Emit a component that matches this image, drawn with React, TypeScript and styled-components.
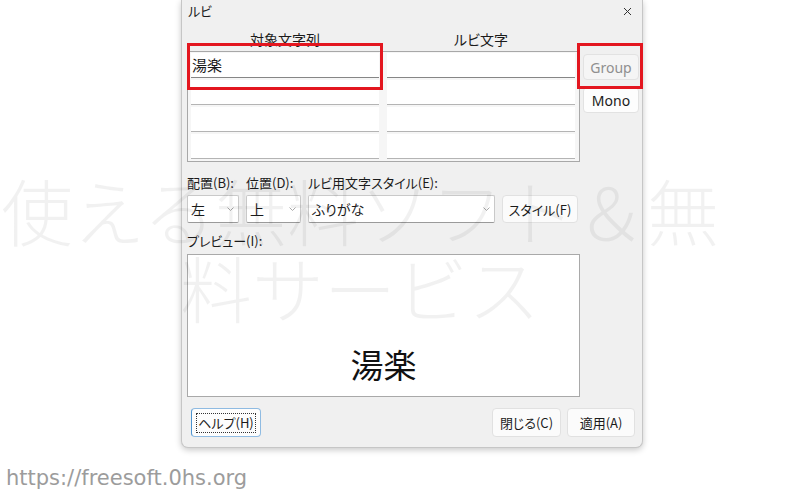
import styled, { createGlobalStyle } from 'styled-components'

const GlobalStyle = createGlobalStyle`
    html, body {
        margin: 0;
        padding: 0;
        background: #ffffff;
    }
    body {
        font-family: "Noto Sans CJK JP", "Noto Sans", sans-serif;
        font-feature-settings: "palt";
        color: #1b1b1b;
    }
`;

const Page = styled.div`
    position: relative;
    width: 800px;
    height: 497px;
    overflow: hidden;
`;

const Dialog = styled.div`
    position: relative;
    box-sizing: border-box;
    margin-left: 181px;
    width: 462px;
    height: 448px;
    background: #f0f0f0;
    border: 1px solid #c6c6c6;
    border-top: none;
    border-radius: 0 0 7px 7px;
    box-shadow: 0 2px 6px rgba(0, 0, 0, 0.22);
    display: flex;
    flex-direction: column;
`;

const TitleBar = styled.div`
    height: 26px;
    display: flex;
    align-items: center;
    justify-content: space-between;
    padding: 0 10px 0 6px;
    font-size: 13px;
    line-height: 16px;
    margin-top: -2px;
`;

const Body = styled.div`
    padding: 6px 3px 0 5px;
    display: flex;
    flex-direction: column;
`;

const TopSection = styled.div`
    display: flex;
    gap: 3px;
`;

const TableArea = styled.div`
    width: 393px;
`;

const HeaderRow = styled.div`
    display: grid;
    grid-template-columns: 188px 188px;
    column-gap: 8px;
    padding: 0 4px;
    height: 21px;
    font-size: 14px;
    line-height: 18px;
    text-align: center;
`;

const TableBox = styled.div`
    box-sizing: border-box;
    border: 1px solid #a8a8a8;
    padding: 1px 4px 2px 3px;
    display: grid;
    grid-template-columns: 188px 188px;
    column-gap: 8px;
    row-gap: 2px;
    background: #f6f6f6;
`;

const Cell = styled.div<{ $strong?: boolean }>`
    box-sizing: border-box;
    height: 25px;
    background: #ffffff;
    border-bottom: 1px solid ${(p) => (p.$strong ? '#868686' : '#b4b4b4')};
    padding-left: 1px;
    font-size: 15px;
    line-height: 24px;
`;

const SideColumn = styled.div`
    display: flex;
    flex-direction: column;
    gap: 7px;
    padding-top: 24px;
`;

const SideButton = styled.div<{ $disabled?: boolean }>`
    box-sizing: border-box;
    width: 56px;
    height: 26px;
    display: flex;
    align-items: center;
    justify-content: center;
    border: 1px solid #e2e2e2;
    border-radius: 4px;
    background: ${(p) => (p.$disabled ? '#f5f5f5' : '#fdfdfd')};
    color: ${(p) => (p.$disabled ? '#8f8f8f' : '#1b1b1b')};
    font-family: "Noto Sans", sans-serif;
    font-size: 14px;
`;

const ControlsGrid = styled.div`
    margin-top: 12px;
    display: grid;
    grid-template-columns: 52px 55px 187px 76px;
    column-gap: 7px;
    row-gap: 3px;
    align-items: center;
`;

const Label = styled.div<{ $span?: number }>`
    font-size: 13px;
    line-height: 18px;
    white-space: nowrap;
    grid-column: span ${(p) => p.$span || 1};
`;

const Combo = styled.div`
    box-sizing: border-box;
    height: 28px;
    background: #ffffff;
    border: 1px solid #c9c9c9;
    border-bottom-color: #9a9a9a;
    border-radius: 2px;
    display: flex;
    align-items: center;
    justify-content: space-between;
    padding: 0 4px 0 3px;
    font-size: 14px;
`;

const ActionButton = styled.div<{ $w?: number; $h?: number }>`
    box-sizing: border-box;
    width: ${(p) => (p.$w ? `${p.$w}px` : 'auto')};
    height: ${(p) => p.$h || 28}px;
    display: flex;
    align-items: center;
    justify-content: center;
    background: #fbfbfb;
    border: 1px solid #e1e1e1;
    border-radius: 4px;
    font-size: 13px;
    white-space: nowrap;
`;

const HelpButton = styled(ActionButton)`
    background: #fdfdfd;
    border-color: #8fbbe2;
    border-left-color: #4d94d0;
`;

const FocusRect = styled.span`
    outline: 1px dotted #333333;
    padding: 0 1px;
    line-height: 18px;
`;

const PreviewLabel = styled.div`
    margin-top: 9px;
    font-size: 13px;
    line-height: 18px;
`;

const PreviewBox = styled.div`
    box-sizing: border-box;
    margin-top: 4px;
    width: 393px;
    height: 143px;
    background: #ffffff;
    border: 1px solid #a9a9a9;
    display: flex;
    align-items: flex-end;
    justify-content: center;
    padding-bottom: 12px;
    font-size: 33px;
    line-height: 40px;
    color: #111111;
`;

const BottomRow = styled.div`
    margin-top: 11px;
    display: flex;
    align-items: center;
    gap: 6px;
    padding: 0 4px;
`;

const Spacer = styled.div`
    flex: 1;
`;

const RedFrame = styled.div<{ $left: number; $top: number; $w: number; $h: number }>`
    position: absolute;
    left: ${(p) => p.$left}px;
    top: ${(p) => p.$top}px;
    width: ${(p) => p.$w}px;
    height: ${(p) => p.$h}px;
    box-sizing: border-box;
    border: 3px solid #e3161f;
    pointer-events: none;
`;

const SiteUrl = styled.div`
    margin: 17px 0 0 6px;
    font-family: "DejaVu Sans", "Verdana", sans-serif;
    font-size: 21px;
    line-height: 26px;
    color: #9c9c9c;
`;

const Watermark = styled.div`
    position: absolute;
    left: 0;
    top: 170px;
    width: 720px;
    text-align: center;
    font-family: "Noto Sans CJK JP", sans-serif;
    font-feature-settings: normal;
    font-weight: 300;
    font-size: 72px;
    line-height: 77px;
    color: rgba(0, 0, 0, 0.055);
    pointer-events: none;
    z-index: 2;
`;

const Chevron = () => (
    <svg width="7" height="4" viewBox="0 0 7 4">
        <polyline points="0.5,0.5 3.5,3.5 6.5,0.5" fill="none" stroke="#a8a8a8" strokeWidth="1" />
    </svg>
);

const CloseIcon = () => (
    <svg width="9" height="9" viewBox="0 0 9 9">
        <path d="M1 1 L8 8 M8 1 L1 8" stroke="#333" strokeWidth="1" />
    </svg>
);

const rows = [
    ['湯楽', ''],
    ['', ''],
    ['', ''],
    ['', ''],
];

const App = () => {
    return (
        <Page>
            <GlobalStyle />
            <Dialog>
                <TitleBar>
                    <span>ルビ</span>
                    <CloseIcon />
                </TitleBar>
                <Body>
                    <TopSection>
                        <TableArea>
                            <HeaderRow>
                                <div>対象文字列</div>
                                <div>ルビ文字</div>
                            </HeaderRow>
                            <TableBox>
                                {rows.flatMap((r, i) => [
                                    <Cell key={`a${i}`} $strong={i === 0}>{r[0]}</Cell>,
                                    <Cell key={`b${i}`} $strong={i === 0}>{r[1]}</Cell>,
                                ])}
                            </TableBox>
                        </TableArea>
                        <SideColumn>
                            <SideButton $disabled>Group</SideButton>
                            <SideButton>Mono</SideButton>
                        </SideColumn>
                    </TopSection>

                    <ControlsGrid>
                        <Label>配置(B):</Label>
                        <Label>位置(D):</Label>
                        <Label $span={2}>ルビ用文字スタイル(E):</Label>
                        <Combo>
                            <span>左</span>
                            <Chevron />
                        </Combo>
                        <Combo>
                            <span>上</span>
                            <Chevron />
                        </Combo>
                        <Combo>
                            <span>ふりがな</span>
                            <Chevron />
                        </Combo>
                        <ActionButton>スタイル(F)</ActionButton>
                    </ControlsGrid>

                    <PreviewLabel>プレビュー(I):</PreviewLabel>
                    <PreviewBox>湯楽</PreviewBox>

                    <BottomRow>
                        <HelpButton $w={70} $h={29}>
                            <FocusRect>ヘルプ(H)</FocusRect>
                        </HelpButton>
                        <Spacer />
                        <ActionButton $w={69} $h={29}>閉じる(C)</ActionButton>
                        <ActionButton $w={68} $h={29}>適用(A)</ActionButton>
                    </BottomRow>
                </Body>
                <RedFrame $left={5} $top={43} $w={196} $h={47} />
                <RedFrame $left={395} $top={43} $w={66} $h={46} />
            </Dialog>
            <SiteUrl>https://freesoft.0hs.org</SiteUrl>
            <Watermark>
                使える無料ソフト＆無
                <br />
                料サービス
            </Watermark>
        </Page>
    );
};

export default App;
